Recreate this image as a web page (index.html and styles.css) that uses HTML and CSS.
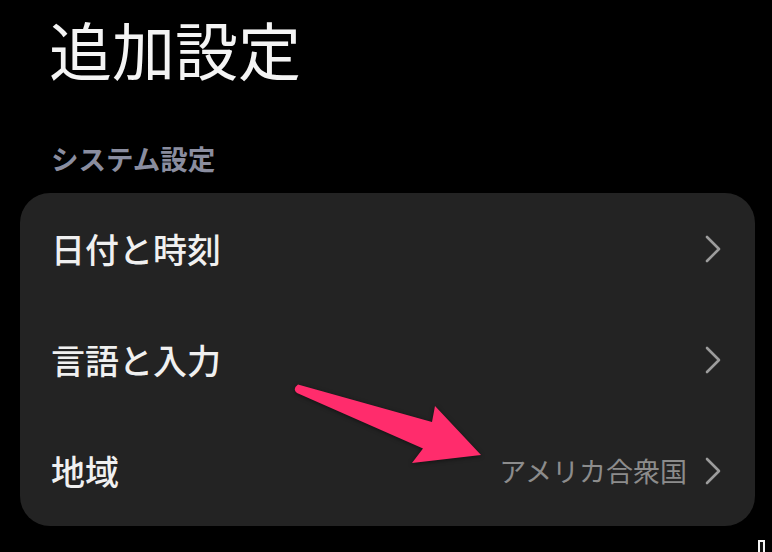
FILE: index.html
```html
<!DOCTYPE html>
<html lang="ja">
<head>
  <meta charset="UTF-8" />
  <meta name="viewport" content="width=device-width, initial-scale=1" />
  <title>追加設定</title>
  <link rel="stylesheet" href="styles.css">
</head>
<body>
  <div class="screen">
    <h1 class="title">追加設定</h1>

    <div class="section-label">システム設定</div>

    <div class="card">
      <div class="row">
        <span class="row-label">日付と時刻</span>
        <span class="row-end">
          <svg class="chevron" width="16" height="28" viewBox="0 0 16 28"><polyline points="2,2 14,14 2,26" /></svg>
        </span>
      </div>
      <div class="row">
        <span class="row-label">言語と入力</span>
        <span class="row-end">
          <svg class="chevron" width="16" height="28" viewBox="0 0 16 28"><polyline points="2,2 14,14 2,26" /></svg>
        </span>
      </div>
      <div class="row">
        <span class="row-label">地域</span>
        <span class="row-end">
          <span class="row-value">アメリカ合衆国</span>
          <svg class="chevron" width="16" height="28" viewBox="0 0 16 28"><polyline points="2,2 14,14 2,26" /></svg>
        </span>
      </div>
    </div>

    <!-- annotation arrow drawn over the card -->
    <svg class="arrow" width="772" height="552" viewBox="0 0 772 552">
      <path d="M298 384.5 L432 422 L435 406 L481 455 L412 463 L423 448.5 L297 393 Q292 389 298 384.5 Z" />
    </svg>

    <div class="corner-mark"></div>
  </div>
</body>
</html>
```

FILE: styles.css
```css
* {
  box-sizing: border-box;
}
body {
  margin: 0;
  background: #000;
  font-family: "Noto Sans CJK JP", "Noto Sans", sans-serif;
  color: #f2f2f2;
}
.screen {
  position: relative;
  width: 772px;
  height: 552px;
  overflow: hidden;
  padding: 16px 17px 0 20px;
}
.title {
  margin: 0 0 0 29px;
  font-size: 63px;
  font-weight: 400;
  line-height: 1;
  color: #f4f4f4;
}
.section-label {
  margin: 66px 0 0 31px;
  font-size: 27.5px;
  font-weight: 700;
  line-height: 1;
  color: #8a8d9f;
}
.card {
  margin-top: 20.5px;
  width: 735px;
  background: #232323;
  border-radius: 30px;
  padding: 0 34px 0 31px;
}
.row {
  height: 111px;
  display: flex;
  align-items: center;
  justify-content: space-between;
}
.row-label {
  font-size: 34px;
  font-weight: 500;
  line-height: 1;
  color: #f0f0f0;
}
.row-end {
  display: flex;
  align-items: center;
  gap: 18px;
}
.row-value {
  font-size: 27px;
  font-weight: 400;
  line-height: 1;
  color: #8c8c8c;
}
.chevron {
  display: block;
  fill: none;
  stroke: #9c9c9c;
  stroke-width: 2.6;
  stroke-linecap: round;
  stroke-linejoin: round;
}
.arrow {
  position: absolute;
  left: 0;
  top: 0;
  pointer-events: none;
}
.arrow path {
  fill: #ff2c6c;
  filter: drop-shadow(0 1px 2px rgba(0, 0, 0, 0.5));
}
.corner-mark {
  position: absolute;
  left: 758px;
  top: 540px;
  width: 7px;
  height: 16px;
  border: 2px solid #f4f4f4;
  background: #111;
}
```
